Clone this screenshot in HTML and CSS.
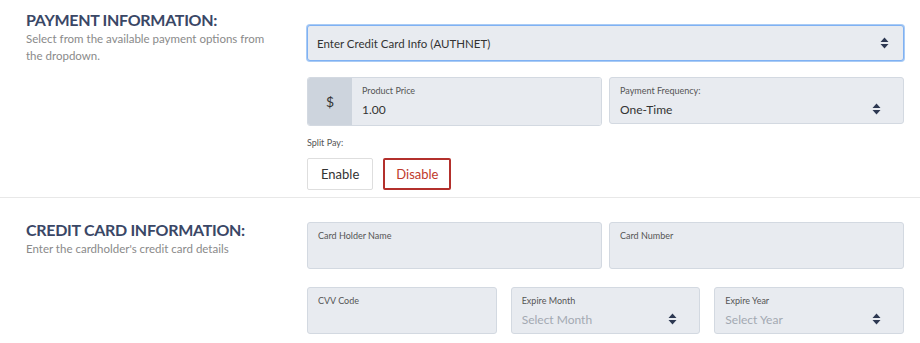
FILE: index.html
```html
<!DOCTYPE html>
<html lang="en">
<head>
  <meta charset="UTF-8" />
  <title>Payment</title>
  <link rel="stylesheet" href="styles.css">
</head>
<body>
  <div class="section section-payment">
    <div class="intro">
      <h2>PAYMENT INFORMATION:</h2>
      <p>Select from the available payment options from the dropdown.</p>
    </div>
    <div class="fields">
      <div class="select-main">
        <span>Enter Credit Card Info (AUTHNET)</span>
        <svg class="arrows" width="9" height="12" viewBox="0 0 9 12"><path d="M4.5 0.5 L8.5 5 H0.5 Z M4.5 11.5 L8.5 7 H0.5 Z" fill="#2d3852"/></svg>
      </div>
      <div class="row row-two">
        <div class="price">
          <div class="addon">$</div>
          <div class="box flat">
            <label>Product Price</label>
            <div class="value">1.00</div>
          </div>
        </div>
        <div class="box">
          <label>Payment Frequency:</label>
          <div class="value">One-Time</div>
          <svg class="arrows" width="9" height="12" viewBox="0 0 9 12"><path d="M4.5 0.5 L8.5 5 H0.5 Z M4.5 11.5 L8.5 7 H0.5 Z" fill="#2d3852"/></svg>
        </div>
      </div>
      <div class="split">
        <label>Split Pay:</label>
        <div class="buttons">
          <button class="btn">Enable</button>
          <button class="btn btn-off">Disable</button>
        </div>
      </div>
    </div>
  </div>

  <div class="section section-card">
    <div class="intro">
      <h2>CREDIT CARD INFORMATION:</h2>
      <p>Enter the cardholder's credit card details</p>
    </div>
    <div class="fields">
      <div class="row row-two">
        <div class="box"><label>Card Holder Name</label><div class="value"></div></div>
        <div class="box"><label>Card Number</label><div class="value"></div></div>
      </div>
      <div class="row row-three">
        <div class="box"><label>CVV Code</label><div class="value"></div></div>
        <div class="box">
          <label>Expire Month</label>
          <div class="value muted">Select Month</div>
          <svg class="arrows" width="9" height="12" viewBox="0 0 9 12"><path d="M4.5 0.5 L8.5 5 H0.5 Z M4.5 11.5 L8.5 7 H0.5 Z" fill="#2d3852"/></svg>
        </div>
        <div class="box">
          <label>Expire Year</label>
          <div class="value muted">Select Year</div>
          <svg class="arrows" width="9" height="12" viewBox="0 0 9 12"><path d="M4.5 0.5 L8.5 5 H0.5 Z M4.5 11.5 L8.5 7 H0.5 Z" fill="#2d3852"/></svg>
        </div>
      </div>
    </div>
  </div>
</body>
</html>
```

FILE: styles.css
```css
html, body {
  margin: 0;
  padding: 0;
}

body {
  font-family: Lato, "Open Sans", sans-serif;
  background: #fff;
  color: #333;
}

.section {
  display: flex;
  align-items: flex-start;
  padding: 0 16px 0 26px;
}

.section-payment {
  height: 197px;
  border-bottom: 1px solid #e8e8e8;
}

.intro {
  width: 281px;
  flex-shrink: 0;
  padding-top: 10px;
}

.section-card .intro {
  padding-top: 22px;
}

h2 {
  margin: 0;
  font-size: 16px;
  line-height: 20px;
  font-weight: bold;
  color: #3a4766;
  letter-spacing: -0.3px;
}

.intro p {
  margin: 0;
  font-size: 11.5px;
  line-height: 17px;
  color: #8a8a8a;
  width: 250px;
}

.fields {
  flex: 1;
  display: flex;
  flex-direction: column;
  gap: 16px;
  padding-top: 25px;
}

.section-card .fields {
  padding-top: 24px;
  gap: 18px;
}

.select-main {
  height: 34px;
  display: flex;
  align-items: center;
  justify-content: space-between;
  padding: 0 14px 0 9px;
  background: #e8ebf0;
  border: 1px solid #7fb1f3;
  border-radius: 3px;
  box-shadow: 0 0 0 1px #a9cbf5;
  font-size: 11.5px;
  color: #333;
}

.row {
  display: grid;
  gap: 7px;
}

.row-two {
  grid-template-columns: 1fr 1fr;
}

.row-three {
  grid-template-columns: 1fr 1fr 1fr;
  gap: 14px;
}

.price {
  display: flex;
  border: 1px solid #d3d9e1;
  border-radius: 3px;
  overflow: hidden;
}

.addon {
  width: 44px;
  background: #cdd4dd;
  display: flex;
  align-items: center;
  justify-content: center;
  font-size: 14px;
  color: #333;
}

.box {
  position: relative;
  height: 45px;
  padding: 0 10px;
  background: #e8ebf0;
  border: 1px solid #d3d9e1;
  border-radius: 3px;
  flex: 1;
}

.box.flat {
  border: none;
  border-radius: 0;
  height: 47px;
}

.box label {
  display: block;
  margin-top: 7px;
  font-size: 9px;
  line-height: 12px;
  color: #555;
}

.box .value {
  margin-top: 5px;
  font-size: 12px;
  line-height: 16px;
  color: #333;
  min-height: 16px;
}

.box .value.muted {
  color: #a3a9b2;
}

.arrows {
  position: absolute;
  right: 22px;
  top: 25px;
}

.select-main .arrows {
  position: static;
}

.split label {
  display: block;
  margin-top: -5px;
  font-size: 9px;
  line-height: 12px;
  color: #555;
}

.buttons {
  display: flex;
  gap: 10px;
  margin-top: 9px;
}

.btn {
  height: 32px;
  padding: 0 13px;
  background: #fff;
  border: 1px solid #dedede;
  border-radius: 2px;
  font-family: inherit;
  font-size: 13px;
  color: #333;
}

.btn-off {
  padding: 0 11px;
  border: 2px solid #b3302c;
  color: #c0392b;
}
```
